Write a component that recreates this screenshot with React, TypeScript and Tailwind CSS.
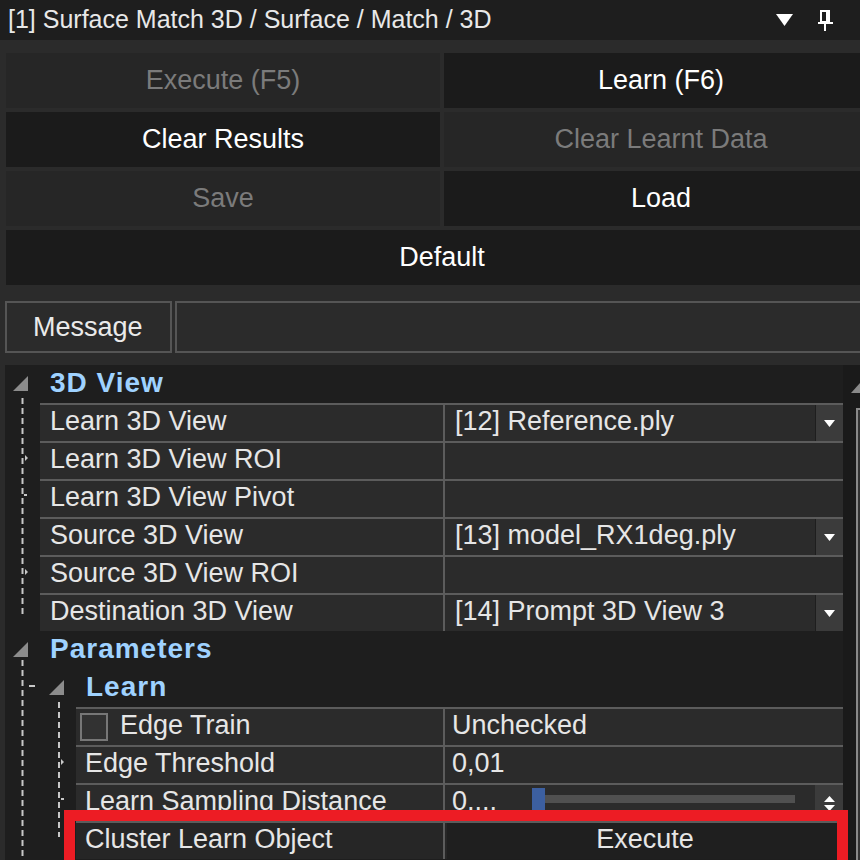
import React from 'react';

const LINE = 'border-[#5c5c5c]';

function CatTriangle() {
  return (
    <svg width="16" height="16" viewBox="0 0 16 16" className="shrink-0">
      <polygon points="16,1 16,16 1,16" fill="#8c8c8c" />
    </svg>
  );
}

function DropButton() {
  return (
    <div className="w-[28px] h-full bg-[#3b3b3b] border-l border-[#1e1e1e] flex items-center justify-center shrink-0">
      <svg width="11" height="7" viewBox="0 0 11 7">
        <polygon points="0,0 11,0 5.5,7" fill="#ffffff" />
      </svg>
    </div>
  );
}

interface PropRowProps {
  indent: 'top' | 'child';
  label: React.ReactNode;
  children?: React.ReactNode;
  rowBg?: string;
}

function PropRow({ indent, label, children, rowBg = 'bg-[#2b2b2b]' }: PropRowProps) {
  const top = indent === 'top';
  return (
    <div className="flex h-[38px]">
      <div className={top ? 'w-[35px] shrink-0' : 'w-[71px] shrink-0'} />
      <div className={`flex flex-1 border-t-2 ${LINE} ${rowBg}`}>
        <div
          className={`${top ? 'w-[403px] pl-[10px]' : 'w-[367px] pl-[9px]'} shrink-0 flex items-center pb-[4px] overflow-hidden whitespace-nowrap`}
        >
          {label}
        </div>
        <div className={`flex-1 flex items-center border-l-2 ${LINE} overflow-hidden whitespace-nowrap`}>
          {children}
        </div>
      </div>
    </div>
  );
}

function Category({ title, child }: { title: string; child?: boolean }) {
  return (
    <div className={`flex h-[38px] items-center pb-[2px] ${child ? 'pl-[43px]' : 'pl-[7px]'}`}>
      <CatTriangle />
      <span className="ml-[22px] text-[28px] font-bold tracking-[1px] text-[#9fd2ff] leading-none">
        {title}
      </span>
    </div>
  );
}

function ToolButton({ label, enabled, wide }: { label: string; enabled: boolean; wide?: boolean }) {
  return (
    <div
      className={`h-[55px] flex items-center justify-center text-[27px] ${
        wide ? 'col-span-2' : ''
      } ${enabled ? 'bg-[#1b1b1b] text-white' : 'bg-[#262626] text-[#7b7b7b]'}`}
    >
      {label}
    </div>
  );
}

export default function App() {
  return (
    <div className="w-[860px] h-[860px] relative overflow-hidden bg-[#2b2b2b] font-['Liberation_Sans',Arial,sans-serif] text-[#e4e4e4]">
      {/* Title bar */}
      <div className="h-[40px] bg-[#1e1e1e] flex items-center pl-[8px] pr-[27px]">
        <span className="flex-1 text-[25px] text-[#e8e8e8] whitespace-nowrap">
          [1] Surface Match 3D / Surface / Match / 3D
        </span>
        <svg width="17" height="12" viewBox="0 0 17 12">
          <polygon points="0,0 17,0 8.5,12" fill="#ffffff" />
        </svg>
        <svg width="15" height="21" viewBox="0 0 15 21" className="ml-[25px]">
          <rect x="3" y="1" width="8" height="11" fill="none" stroke="#ffffff" strokeWidth="2" />
          <rect x="8" y="1" width="3" height="11" fill="#ffffff" />
          <rect x="0" y="12" width="15" height="2" fill="#ffffff" />
          <rect x="6" y="13" width="2" height="8" fill="#ffffff" />
        </svg>
      </div>

      {/* Command buttons (panel is wider than the visible window) */}
      <div className="pt-[13px] pl-[6px] w-[880px] grid grid-cols-[434px_434px] gap-[4px]">
        <ToolButton label="Execute (F5)" enabled={false} />
        <ToolButton label="Learn (F6)" enabled />
        <ToolButton label="Clear Results" enabled />
        <ToolButton label="Clear Learnt Data" enabled={false} />
        <ToolButton label="Save" enabled={false} />
        <ToolButton label="Load" enabled />
        <ToolButton label="Default" enabled wide />
      </div>

      {/* Message */}
      <div className="mt-[16px] pl-[5px] flex h-[52px] gap-[3px]">
        <div className="w-[167px] border-2 border-[#555555] flex items-center pl-[26px] text-[27px] text-[#eaeaea]">
          Message
        </div>
        <div className="flex-1 border-2 border-r-0 border-[#555555]" />
      </div>

      {/* Property grid */}
      <div className="mt-[12px] ml-[5px] h-[495px] flex bg-[#1e1e1e] relative text-[27px] text-[#e6e6e6]">
        <div className="flex-1 flex flex-col">
          <Category title="3D View" />
          <PropRow indent="top" label="Learn 3D View">
            <span className="flex-1 pl-[10px] pb-[4px]">[12] Reference.ply</span>
            <DropButton />
          </PropRow>
          <PropRow indent="top" label="Learn 3D View ROI" />
          <PropRow indent="top" label="Learn 3D View Pivot" />
          <PropRow indent="top" label="Source 3D View">
            <span className="flex-1 pl-[10px] pb-[4px]">[13] model_RX1deg.ply</span>
            <DropButton />
          </PropRow>
          <PropRow indent="top" label="Source 3D View ROI" />
          <PropRow indent="top" label="Destination 3D View">
            <span className="flex-1 pl-[10px] pb-[4px]">[14] Prompt 3D View 3</span>
            <DropButton />
          </PropRow>
          <Category title="Parameters" />
          <Category title="Learn" child />
          <PropRow
            indent="child"
            label={
              <div className="flex items-center -ml-[5px] pt-[4px]">
                <div className="w-[28px] h-[28px] border-2 border-[#777777] bg-[#323232]" />
                <span className="ml-[12px] -mt-[4px]">Edge Train</span>
              </div>
            }
          >
            <span className="pl-[7px] pb-[4px]">Unchecked</span>
          </PropRow>
          <PropRow indent="child" label="Edge Threshold">
            <span className="pl-[7px] pb-[4px]">0,01</span>
          </PropRow>
          <PropRow indent="child" label="Learn Sampling Distance">
            <span className="pl-[7px] pb-[4px] w-[87px] shrink-0 overflow-hidden">0,...</span>
            <div className="flex-1 h-full flex items-center pb-[8px] pr-[20px]">
              <div className="relative flex-1 h-[8px] bg-[#505050]">
                <div className="absolute left-0 -top-[7px] w-[13px] h-[23px] bg-[#3c5fa0]" />
              </div>
            </div>
            <div className="w-[28px] h-full bg-[#3b3b3b] flex flex-col items-center justify-center gap-[3px] shrink-0">
              <svg width="11" height="6" viewBox="0 0 11 6">
                <polygon points="0,6 11,6 5.5,0" fill="#ffffff" />
              </svg>
              <svg width="11" height="6" viewBox="0 0 11 6">
                <polygon points="0,0 11,0 5.5,6" fill="#ffffff" />
              </svg>
            </div>
          </PropRow>
          <PropRow indent="child" label="Cluster Learn Object" rowBg="bg-[#262626]">
            <div className="ml-[2px] h-full flex-1 bg-[#1f1f1f] flex items-center justify-center pb-[4px]">
              Execute
            </div>
          </PropRow>
        </div>

        {/* Scrollbar */}
        <div className="w-[17px] bg-[#1a1a1a] flex flex-col pl-[8px] pt-[18px]">
          <svg width="9" height="10" viewBox="0 0 9 10">
            <polygon points="0,10 9,10 9,0" fill="#8a8a8a" />
          </svg>
          <div className="mt-[15px] ml-[5px] flex-1 border-l-2 border-t-2 border-[#8a8a8a] bg-[#333333]" />
        </div>

        {/* Tree connector lines */}
        <svg
          className="absolute left-0 top-0 pointer-events-none"
          width="80"
          height="495"
          viewBox="0 0 80 495"
        >
          <g stroke="#c8c8c8" strokeWidth="2" strokeDasharray="6 4" fill="none">
            <line x1="17.5" y1="33" x2="17.5" y2="250" />
            <line x1="17.5" y1="295" x2="17.5" y2="495" />
            <line x1="54" y1="337" x2="54" y2="472" />
          </g>
          <g fill="#c8c8c8">
            <polygon points="20,90 23,93 20,96" />
            <polygon points="20,204 23,207 20,210" />
            <rect x="19" y="129" width="3" height="2" />
            <rect x="24" y="320" width="6" height="2" />
            <polygon points="56,394 59,397 56,400" />
            <rect x="56" y="433" width="3" height="2" />
          </g>
        </svg>
      </div>

      {/* Highlight annotation */}
      <div className="absolute left-[64px] top-[810px] w-[784px] h-[70px] border-[11px] border-[#ed1c24] pointer-events-none" />
    </div>
  );
}
